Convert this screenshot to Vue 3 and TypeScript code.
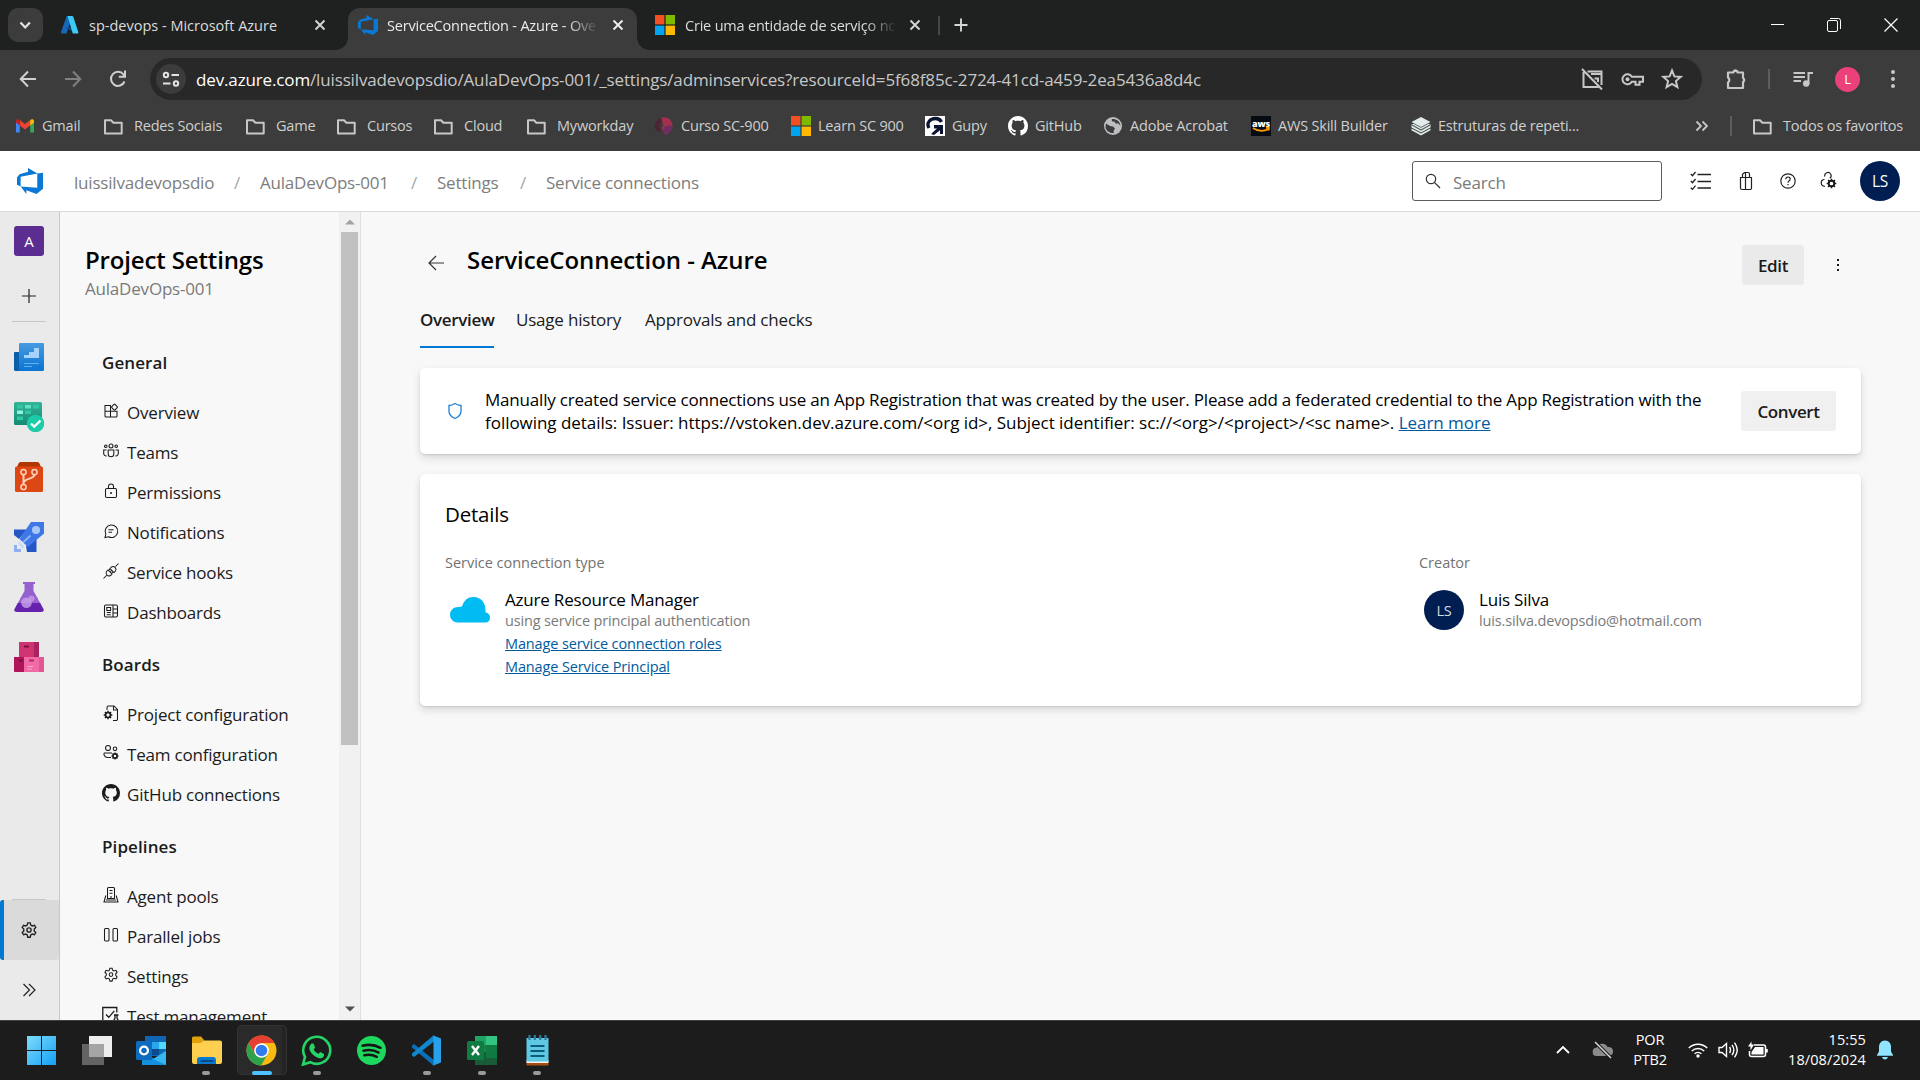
<script setup lang="ts">
interface Bookmark { kind: string; label: string; width: number }
interface NavItem { icon: string; label: string }
interface NavGroup { title: string; items: NavItem[] }

const folder = '<path d="M2 4.2h6l2.4 2.6h8.3v10.6H2z" fill="none" stroke="#c7c7c7" stroke-width="2" stroke-linejoin="round"/>'
const msLogo = '<path fill="#f25022" d="M0 0h9.4v9.4H0z"/><path fill="#7fba00" d="M10.6 0H20v9.4h-9.4z"/><path fill="#00a4ef" d="M0 10.6h9.4V20H0z"/><path fill="#ffb900" d="M10.6 10.6H20V20h-9.4z"/>'
const octocat = 'M8 0C3.58 0 0 3.58 0 8c0 3.54 2.29 6.53 5.47 7.59.4.07.55-.17.55-.38 0-.19-.01-.82-.01-1.49-2.01.37-2.53-.49-2.69-.94-.09-.23-.48-.94-.82-1.13-.28-.15-.68-.52-.01-.53.63-.01 1.08.58 1.23.82.72 1.21 1.87.87 2.33.66.07-.52.28-.87.51-1.07-1.78-.2-3.64-.89-3.64-3.95 0-.87.31-1.59.82-2.15-.08-.2-.36-1.02.08-2.12 0 0 .67-.21 2.2.82.64-.18 1.32-.27 2-.27s1.36.09 2 .27c1.53-1.04 2.2-.82 2.2-.82.44 1.1.16 1.92.08 2.12.51.56.82 1.27.82 2.15 0 3.07-1.87 3.75-3.65 3.95.29.25.54.73.54 1.48 0 1.07-.01 1.93-.01 2.2 0 .21.15.46.55.38A8.01 8.01 0 0 0 16 8c0-4.42-3.58-8-8-8z'
const gearPath = 'M7.9 1.2h2.2l.5 2 1.3.7 2-.6 1.2 1.9-1.4 1.6v1.6l1.4 1.6-1.2 1.9-2-.6-1.3.7-.5 2.1H7.9l-.5-2.1-1.3-.7-2 .6L2.9 10l1.400-1.600V6.800L2.900 5.200l1.200-1.900 2 .6 1.300-.7z'
const miniGear = (x: number, y: number, r = 3) => {
  const spokes = [0, 45, 90, 135].map(a => `<path d="M${x - r * 1.3} ${y}h${r * 0.7}M${x + r * 0.6} ${y}h${r * 0.7}" stroke="#1b1b1b" stroke-width="1.500" transform="rotate(${a} ${x} ${y})"/>`).join('')
  return `${spokes}<circle cx="${x}" cy="${y}" r="${r * 0.75}" fill="none" stroke="#1b1b1b" stroke-width="${r * 0.5}"/>`
}

const bookmarkIcons: Record<string, string> = {
  folder,
  ms: msLogo,
  gmail: '<path fill="#4285f4" d="M1 5v11.500h3.800V9L1 6z"/><path fill="#34a853" d="M15.200 16.500H19V5l-3.800 3z"/><path fill="#ea4335" d="M4.800 4 10 8l5.200-4v5.500L10 13.500l-5.200-4z"/><path fill="#c5221f" d="M1 5.200C1 3 3.300 2.700 4.800 4v5.500L1 6.500z"/><path fill="#fbbc04" d="M19 5.200C19 3 16.700 2.700 15.200 4v5.500L19 6.500z"/>',
  brain: '<path fill="#a0324f" d="M7 1.500c7-1.500 12 3 11.500 8.500-.3 4-3 7-7 9l-4-7 2-2z"/><path fill="#702d61" d="M10 11c3-1 6-2 8.500-1-.3 4-3 7-7 9L9 14z"/><path fill="#4e2435" d="M7 2C2 4 0 8 1 12l3 4 3-1-2-6 3-3z"/>',
  gupy: '<path fill="#fff" d="M0 0h20v20H0z"/><path d="M4 12c-3-5 1-9.500 6.500-9.500 3 0 5 1.500 6 3.500" fill="none" stroke="#0c1433" stroke-width="3.300"/><path d="M9 9h9v9h-3v-3.800L9 19l-3-1 6-5.500H9z" fill="#0c1433"/>',
  github: `<g transform="scale(1.250)"><path fill="#fff" d="${octocat}"/></g>`,
  globe: '<circle cx="10" cy="10" r="9" fill="#bdbec1"/><path fill="#3c3c3c" d="M3 7.500 7 10l3 .5 2 2-1.500 2.500.5 2C7 17.500 3 15 2.500 11zM9 3c-1 2 1 3 2.500 2.500l1 2h3L17.500 10C17 5.500 14 3 9 3z"/>',
  aws: '<path fill="#050b10" d="M0 0h20v20H0z"/><text x="10" y="10.500" fill="#fff" font-family="Open Sans, sans-serif" font-size="9" font-weight="800" text-anchor="middle">aws</text><path d="M2 12c5 3.500 11 3.500 15.500 1M15 11.500l3 .5-.5 2.500" fill="none" stroke="#f90" stroke-width="1.800"/>',
  layers: '<path fill="#e2ecea" d="M10 1 19.500 6 10 11 .5 6z"/><path fill="#e2ecea" d="m.5 8.500 2-.8 7.500 4 7.500-4 2 .8v3L10 16.500.5 11.500z"/><path fill="#e2ecea" d="m.5 12.500 9.500 5 9.500-5v1.800L10 19.500.5 14.300z"/><path d="m1 9 9 5 9-5" fill="none" stroke="#55605e" stroke-width="1.200"/>',
}

const bookmarks: Bookmark[] = [
  { kind: 'gmail', label: 'Gmail', width: 88 },
  { kind: 'folder', label: 'Redes Sociais', width: 142 },
  { kind: 'folder', label: 'Game', width: 91 },
  { kind: 'folder', label: 'Cursos', width: 97 },
  { kind: 'folder', label: 'Cloud', width: 93 },
  { kind: 'folder', label: 'Myworkday', width: 128 },
  { kind: 'brain', label: 'Curso SC-900', width: 137 },
  { kind: 'ms', label: 'Learn SC 900', width: 134 },
  { kind: 'gupy', label: 'Gupy', width: 83 },
  { kind: 'github', label: 'GitHub', width: 95 },
  { kind: 'globe', label: 'Adobe Acrobat', width: 148 },
  { kind: 'aws', label: 'AWS Skill Builder', width: 160 },
  { kind: 'layers', label: 'Estruturas de repeti...', width: 180 },
]

const navIcons: Record<string, string> = {
  overview: '<path d="M3 3.500h5.500V15H4a1 1 0 0 1-1-1zM3 9.200h12V14a1 1 0 0 1-1 1H8.500V9.200"/><rect x="10.200" y="2.800" width="4.600" height="4.600" rx=".8" transform="rotate(45 12.500 5.100)"/>',
  teams: '<circle cx="9" cy="4" r="2"/><circle cx="3.800" cy="4.200" r="1.300"/><circle cx="14.200" cy="4.200" r="1.300"/><path d="M6.200 8h5.600v4a2.800 2.800 0 0 1-5.600 0zM4.500 8H1.700v3.500a2.500 2.500 0 0 0 3 2.500M13.500 8h2.800v3.500a2.500 2.500 0 0 1-3 2.500"/>',
  permissions: '<rect x="3.500" y="6.500" width="11" height="9" rx="1.300"/><path d="M6.500 6.500V4.500a2.500 2.500 0 0 1 5 0v2"/><circle cx="9" cy="11" r="1" fill="#1b1b1b" stroke="none"/>',
  notifications: '<path d="M3 15.500 3.800 12A6.300 6.300 0 1 1 6.500 14.800zM6.500 7.700h5M6.500 10.300h3.500"/>',
  hooks: '<path d="m1.500 16.500 3-3M13.500 4.500l3-3M8 6.500l1.500-1.500a2.900 2.900 0 0 1 4 4L12 10.500zM6 8l4 4-1.500 1.500a2.900 2.900 0 0 1-4-4zM8 10l1.500-1.500M6.500 8.500 8 6.900M9.500 11.500l1.500-1.600"/>',
  dashboards: '<rect x="2.500" y="3" width="13" height="12" rx="1.500"/><path d="M11 3v12M11 7h4.500M11 11h4.500M4.800 5.500h3.800v3H4.800zM4.800 10.500h4M4.800 12.700h4"/>',
  projectConfig: `<path d="M5 6V3.500a1.500 1.500 0 0 1 1.500-1.500H12l3.500 3.500V15a1.500 1.500 0 0 1-1.500 1.500h-3M11.500 2v4h4"/>${miniGear(6, 11, 3.300)}`,
  teamConfig: `<circle cx="6" cy="4" r="2.500"/><circle cx="13" cy="4.800" r="1.800"/><path d="M10 9H2.500C1.500 9 1.500 13.500 6 13.500h3"/>${miniGear(13, 12, 2.700)}`,
  github: `<g transform="scale(1.125)"><path fill="#1b1b1b" stroke="none" d="${octocat}"/></g>`,
  agent: '<path d="M5.500 12.500V2.500a1 1 0 0 1 1-1h5a1 1 0 0 1 1 1v10zM7.500 4.500h3M7.500 7.200h3M3.800 9.500 2 16h14l-1.800-6.500M4 14h10M9 10v2.500"/>',
  parallel: '<rect x="2.500" y="2.500" width="4.500" height="12.500" rx="1"/><rect x="11" y="2.500" width="4.500" height="12.500" rx="1"/>',
  settings: `<g transform="translate(0 1)"><path d="${gearPath}"/><circle cx="9" cy="7.600" r="1.800"/></g>`,
  test: '<path d="M9.500 15.500H.8V1.500h14v5M4 8.500l2.800 2.800 5.500-6.500M12 9h4.500M13 9v3l-2.500 5h7L15 12V9" stroke-width="1.300"/>',
}

const groups: NavGroup[] = [
  { title: 'General', items: [
    { icon: 'overview', label: 'Overview' },
    { icon: 'teams', label: 'Teams' },
    { icon: 'permissions', label: 'Permissions' },
    { icon: 'notifications', label: 'Notifications' },
    { icon: 'hooks', label: 'Service hooks' },
    { icon: 'dashboards', label: 'Dashboards' },
  ] },
  { title: 'Boards', items: [
    { icon: 'projectConfig', label: 'Project configuration' },
    { icon: 'teamConfig', label: 'Team configuration' },
    { icon: 'github', label: 'GitHub connections' },
  ] },
  { title: 'Pipelines', items: [
    { icon: 'agent', label: 'Agent pools' },
    { icon: 'parallel', label: 'Parallel jobs' },
    { icon: 'settings', label: 'Settings' },
    { icon: 'test', label: 'Test management' },
  ] },
]

const hubs: string[] = [
  '<defs><linearGradient id="h1" x1="0" y1="0" x2="0" y2="1"><stop offset="0" stop-color="#469be0"/><stop offset="1" stop-color="#0a74d2"/></linearGradient></defs><path fill="#0b5ea8" d="M0 11q0-1 1-1h5v19H1.500Q0 29 0 27.500z"/><path fill="url(#h1)" d="M5 2q0-1 1-1h23q1 0 1 1v25.500q0 1.500-1.500 1.500H3.500Q5 29 5 27z"/><path fill="#a5d3fb" d="M10 13h5v-3h5V6h5v10H10z"/><path stroke="#5fb0f3" stroke-width="1.200" d="M10 21.500h15M10 24.500h8"/>',
  '<defs><linearGradient id="h2" x1="0" y1="0" x2="0" y2="1"><stop offset="0" stop-color="#35b496"/><stop offset="1" stop-color="#158a75"/></linearGradient></defs><rect width="28" height="23" rx="1.500" fill="url(#h2)"/><path fill="#5fe3c2" d="M11 3h6v3.500h-6z"/><path fill="#8ff5da" d="M3 8.500h6V12H3z"/><path fill="#2fc8a5" d="M3 3h6v3.500H3zM19 3h6v3.500h-6zM11 8.500h6V12h-6zM3 14.500h6V18H3z"/><circle cx="21.500" cy="21.500" r="8.700" fill="#1bcca9"/><path d="m17 21.500 3.200 3.200 6.300-6" fill="none" stroke="#fff" stroke-width="2.300"/>',
  '<path fill="#b23600" d="M4.500 1.500Q5 0 6.500 0h17q1.500 0 2 1.500L27 5H3z"/><path fill="#dd4713" d="M1 6q0-1.500 1.500-1.500h25Q29 4.500 29 6v22.500q0 1.500-1.500 1.500h-25Q1 30 1 28.500z"/><g fill="none" stroke="#ffd0bd" stroke-width="1.500"><circle cx="9.500" cy="10" r="2.600"/><circle cx="20.500" cy="10" r="2.600"/><circle cx="9.500" cy="25" r="2.600"/><path d="M9.500 12.600v9.800M20.500 12.600c0 5-10 3-11 8.500" stroke-width="2"/></g>',
  '<path fill="#2457c5" d="M0 7.500h13L5 17 0 13zM12 24l10.500-8.500V30H13z"/><path fill="#3f78e6" d="M17 0h13v11.500L14 25 5.500 17z"/><circle cx="22" cy="8" r="4" fill="#a9c6f8"/><path stroke="#8cb2f5" stroke-width="1.800" d="m9 20.500 7.500-7"/><path fill="#c8d9fa" d="m5 19 5 5-1 3-5-5z"/><path fill="#8db0f1" d="M0 23h3v4h4v3H0z"/>',
  '<path fill="#9561cf" d="M9 0h12v2h-1.500v7L24 17H6l4.500-8V2H9z"/><path fill="#9b63d2" d="M7 15.500h16l3.500 6h-23z"/><path fill="#6422ad" d="M3.800 21h22.400l3.300 6q1 3-2.500 3H3Q-.5 30 .5 27z"/><circle cx="12.500" cy="20.700" r="5.300" fill="#c9a3ec" opacity=".8"/><circle cx="17.500" cy="16.500" r="3" fill="#c9a3ec" opacity=".7"/>',
  '<path fill="#cf3372" d="M5 0h20v15H5z"/><path fill="#a82360" d="M20 0h5v15h-5z"/><path fill="#b0145b" d="M0 15h10v15H1q-1 0-1-1z"/><path fill="#f06aa6" d="M10 15h20v14q0 1-1 1H10z"/><path fill="#e25694" d="M25 15h5v15h-5z"/><path stroke="#80103f" stroke-width="2" d="M10 4.500h5M5 18.500h4"/><path stroke="#b62665" stroke-width="2" d="M15 18.500h5"/><path stroke="#ffa5cf" stroke-width="1.200" d="M13 24.500h6M13 27h5"/>',
]

const taskbar: { id: string; state: string; art: string }[] = [
  { id: 'start', state: '', art: '<defs><linearGradient id="t1" x1="0" y1="0" x2="1" y2="1"><stop offset="0" stop-color="#7fdcfb"/><stop offset="1" stop-color="#12a0f5"/></linearGradient></defs><path fill="url(#t1)" d="M1 1h14v14H1zM16 1h14v14H16zM1 16h14v14H1zM16 16h14v14H16z"/>' },
  { id: 'views', state: '', art: '<path fill="#eee" d="M8 1h23v21H8z"/><path fill="#6d6d6d" d="M1 9h22v21H1z" opacity=".9"/><path fill="#a5a5a5" d="M8 9h15v13H8z"/>' },
  { id: 'outlook', state: '', art: '<path fill="#1066b5" d="M9 1h21v20H9z"/><path fill="#28a8ea" d="M16 7h7v7h-7z"/><path fill="#50d9ff" d="M23 7h7v7h-7z"/><path fill="#0a4b8f" d="M9 7h7v7H9zM16 14h7v6h-7z"/><path fill="#1490df" d="M6 16l12.500 8L30 16v14H6z"/><path fill="#35b8f1" d="m30 16-13 8 13 6z"/><rect y="6" width="16" height="19" rx="1.500" fill="#0f6cbd"/><circle cx="8" cy="15.500" r="3.900" fill="none" stroke="#fff" stroke-width="2.300"/>' },
  { id: 'explorer', state: 'open', art: '<path fill="#e0a20c" d="M1 3q0-1.500 1.500-1.500H10L13 5v6H1z"/><path fill="#ffd04f" d="M1 8h9l3-2.500h16q2 0 2 2V27q0 2-2 2H3q-2 0-2-2z"/><path fill="#0a78cf" d="M6 25q0-3 3-3h13q3 0 3 3v4H6z"/><path stroke="#043e70" stroke-width="1.500" d="M9.500 26h13"/>' },
  { id: 'chrome', state: 'current', art: '<circle cx="15.500" cy="15.500" r="15" fill="#f9bb11"/><path fill="#e63e32" d="M2.500 8a15 15 0 0 1 26 0H15.500L9 19z"/><path fill="#2da14c" d="M2.500 8A15 15 0 0 0 15 30.500L21.800 19 9 19z"/><circle cx="15.500" cy="15.500" r="7.300" fill="#fff"/><circle cx="15.500" cy="15.500" r="5.800" fill="#317bf0"/>' },
  { id: 'whatsapp', state: 'open', art: '<path d="M2 29.500 4 22A13.500 13.500 0 1 1 9.300 27.200z" fill="none" stroke="#25d366" stroke-width="2.600"/><path fill="#25d366" d="M10.500 8.500h2l1.600 4-1.400 1.900c1 2 2.700 3.500 4.800 4.400l1.800-1.700 3.700 1.800v1.800c-1 2.500-3.500 3-5.500 2.300-4-1.200-7-4-8.700-7.500-1-2.500-.5-5.500 1.700-7z"/>' },
  { id: 'spotify', state: '', art: '<circle cx="15.500" cy="15.500" r="14.500" fill="#1ed75f"/><path d="M6.500 10.800c6-1.600 12.500-1 18 2M7.500 15.700c5-1.300 10.500-.8 15 1.800M8.300 20.200c4.500-1 8.500-.6 12.500 1.600" fill="none" stroke="#151515" stroke-width="2.500" stroke-linecap="round"/>' },
  { id: 'vscode', state: 'open', art: '<path fill="#0a6fb8" d="M1 10.500 3 9l20 16v6L1 12.500z"/><path fill="#1088d0" d="M1 20.500 3 22 23 6.500V0L1 18.500z"/><path fill="#27a2ea" d="M22.500.5 30 3.500v24l-7.500 3z"/>' },
  { id: 'excel', state: 'open', art: '<path fill="#21a366" d="M8 1h11v9H8z"/><path fill="#33c481" d="M19 1h11v9H19z"/><path fill="#107c41" d="M19 10h11v7H19z"/><path fill="#17864c" d="M8 10h11v7H8z"/><path fill="#185c37" d="M8 17h22v13H8z"/><path fill="#0f7a41" d="M19 17h11v6H19z"/><rect y="6" width="17" height="19" rx="1.500" fill="#107c41"/><path stroke="#fff" stroke-width="2.400" d="m5 11 7 9M12 11l-7 9"/>' },
  { id: 'notepad', state: 'open', art: '<path fill="#a64e12" d="M4.500 26h22v4.500h-22z"/><path fill="#f1f1f1" d="M4.500 25h22v3h-22z"/><path fill="#5fc9e4" d="M4.500 3h22v23.500h-22z"/><path stroke="#0b5b7b" stroke-width="1.800" d="M8.500 11h14M8.500 16h14M8.500 21h14"/><path stroke="#2b7d9b" stroke-width="2.200" d="M7.500 0v5M12.800 0v5M18.200 0v5M23.500 0v5"/>' },
]
</script>

<template>
  <div class="screen">
    <header class="tabstrip">
      <div class="tab-search">
        <svg width="34" height="34" viewBox="0 0 34 34"><path d="m12.500 14.500 4.700 5 4.700-5" fill="none" stroke="#e3e3e3" stroke-width="2.200" /></svg>
      </div>
      <div class="tab first">
        <svg class="fav" width="20" height="20" viewBox="0 0 20 20">
          <path fill="#1667b7" d="M6.700 1h5.500L6.600 18.500H2q-1.500 0-1-1.500z" /><path fill="#0a4f98" d="M5.500 12.500h8l2.500 6z" /><path fill="#3ccbf4" d="M7.500 1H12q1 0 1.300 1l5 15q.5 1.500-1 1.500h-4.500z" />
        </svg>
        <span class="tab-title">sp-devops - Microsoft Azure</span>
        <svg class="x" width="12" height="12" viewBox="0 0 12 12"><path d="m1.500 1.500 9 9m0-9-9 9" stroke="#d5d5d5" stroke-width="1.900" /></svg>
      </div>
      <div class="tab active">
        <svg class="fav" width="20" height="20" viewBox="0 0 20 20"><path fill="#0a78d4" d="M20 3.700v12.200l-5 4.100-7.800-2.800V20l-4.400-5.800 12.800 1V4.200zm-4.300.6L8.500 0v2.800L1.900 4.800 0 7.300v5.600l2.800 1.300V6.800z" /></svg>
        <span class="tab-title">ServiceConnection - Azure - Ove</span>
        <svg class="x" width="12" height="12" viewBox="0 0 12 12"><path d="m1.500 1.500 9 9m0-9-9 9" stroke="#eee" stroke-width="1.900" /></svg>
      </div>
      <div class="tab third">
        <svg class="fav" width="20" height="20" viewBox="0 0 20 20" v-html="msLogo" />
        <span class="tab-title">Crie uma entidade de serviço no</span>
        <svg class="x" width="12" height="12" viewBox="0 0 12 12"><path d="m1.500 1.500 9 9m0-9-9 9" stroke="#d5d5d5" stroke-width="1.900" /></svg>
      </div>
      <i class="tab-sep" />
      <svg class="new-tab" width="14" height="14" viewBox="0 0 14 14"><path d="M7 .5v13M.5 7h13" stroke="#d5d5d5" stroke-width="1.900" /></svg>
      <div class="window-controls">
        <svg width="14" height="14" viewBox="0 0 14 14"><path d="M1 6.500h13" stroke="#fff" /></svg>
        <svg width="14" height="14" viewBox="0 0 14 14" fill="none" stroke="#fff"><rect x=".5" y="2.500" width="10" height="11" rx="1.500" /><path d="M3 .5h8.500q2 0 2 2V11" /></svg>
        <svg width="14" height="14" viewBox="0 0 14 14"><path d="m.5.5 13 13m0-13-13 13" stroke="#fff" stroke-width="1.200" /></svg>
      </div>
    </header>

    <div class="toolbar">
      <svg class="nav-btn" width="18" height="18" viewBox="0 0 18 18"><path d="M17 9H2M9 1.500 1.700 9 9 16.500" fill="none" stroke="#d0d0d0" stroke-width="2" /></svg>
      <svg class="nav-btn" width="18" height="18" viewBox="0 0 18 18"><path d="M1 9h15M9 1.500 16.300 9 9 16.500" fill="none" stroke="#808080" stroke-width="2" /></svg>
      <svg class="nav-btn reload" width="18" height="18" viewBox="0 0 18 18"><path d="M15.500 11.500A7 7 0 1 1 14.500 4.500L16 6M16 .5v6.300H9.800" fill="none" stroke="#d0d0d0" stroke-width="2" /></svg>
      <div class="omnibox">
        <span class="site-info">
          <svg width="18" height="18" viewBox="0 0 18 18" fill="none" stroke="#e3e3e3" stroke-width="2"><circle cx="4" cy="5" r="2.200" /><path d="M9.500 5H17M1 13.500h7.500" /><circle cx="14" cy="13.500" r="2.200" /></svg>
        </span>
        <span class="url"><b>dev.azure.com</b>/luissilvadevopsdio/AulaDevOps-001/_settings/adminservices?resourceId=5f68f85c-2724-41cd-a459-2ea5436a8d4c</span>
        <span class="omni-icons">
          <svg width="24" height="24" viewBox="0 0 24 24" fill="none" stroke="#c7c7c7" stroke-width="2"><path d="M7.500 4.500h14V18M18.500 20h-15V5M2 2l20 20.500" /><path d="M11 7h10M14.500 11.500H18V15" /></svg>
          <svg width="24" height="24" viewBox="0 0 24 24" fill="none" stroke="#c7c7c7" stroke-width="2"><path d="M11.800 9.800a5 5 0 1 0 0 4.900h3.700v3h4v-3H23V9.800z" /><circle cx="7.500" cy="12.200" r="2" fill="#c7c7c7" stroke="none" /></svg>
          <svg width="24" height="24" viewBox="0 0 24 24" fill="none" stroke="#c7c7c7" stroke-width="2"><path d="m12 3.500 2.400 5.900 6.300.5-4.800 4.100 1.500 6.200L12 16.900l-5.400 3.300L8.100 14 3.300 9.900l6.300-.5z" /></svg>
        </span>
      </div>
      <svg class="ext" width="24" height="24" viewBox="0 0 24 24"><path d="M4 5.500h5.500a2 2 0 0 1 4 0H19v5.500a2.300 2.300 0 0 1 0 4V21H4v-5.500a3 3 0 0 0 0-5z" fill="none" stroke="#c7c7c7" stroke-width="2.200" stroke-linejoin="round" /><path fill="#c7c7c7" d="M9 5a2.500 2.500 0 0 1 5 0zM19 10.500a2.600 2.600 0 0 1 0 5z" /></svg>
      <i class="bar-sep" />
      <svg class="media" width="22" height="22" viewBox="0 0 22 22"><path d="M1.500 5H13M1.500 9H13M1.500 13H9M16.500 16V5H21" fill="none" stroke="#c7c7c7" stroke-width="2" /><circle cx="14.200" cy="15.500" r="3.200" fill="#c7c7c7" /></svg>
      <span class="profile">L</span>
      <svg class="menu" width="6" height="20" viewBox="0 0 6 20" fill="#c7c7c7"><circle cx="3" cy="3" r="2" /><circle cx="3" cy="10" r="2" /><circle cx="3" cy="17" r="2" /></svg>
    </div>

    <div class="bookmarks">
      <div v-for="b in bookmarks" :key="b.label" class="bookmark" :class="b.kind" :style="{ width: b.width + 'px' }">
        <svg width="20" height="20" viewBox="0 0 20 20" v-html="bookmarkIcons[b.kind]" />
        <span>{{ b.label }}</span>
      </div>
      <div class="bookmark-end">
        <svg width="14" height="12" viewBox="0 0 14 12"><path d="m1.500 1.500 4.500 4.500-4.500 4.500M7.500 1.500 12 6l-4.500 4.500" fill="none" stroke="#c7c7c7" stroke-width="1.800" /></svg>
        <i class="bar-sep" />
        <div class="bookmark folder">
          <svg width="20" height="20" viewBox="0 0 20 20" v-html="folder" />
          <span>Todos os favoritos</span>
        </div>
      </div>
    </div>

    <div class="suite">
      <svg class="logo" width="26" height="26" viewBox="0 0 20 20"><path fill="#0a78d4" d="M20 3.700v12.200l-5 4.100-7.800-2.800V20l-4.400-5.800 12.800 1V4.200zm-4.300.6L8.500 0v2.800L1.900 4.800 0 7.300v5.600l2.800 1.300V6.800z" /></svg>
      <nav class="crumbs">
        <span class="c1">luissilvadevopsdio</span><span class="slash">/</span>
        <span class="c2">AulaDevOps-001</span><span class="slash">/</span>
        <span class="c3">Settings</span><span class="slash">/</span>
        <span class="c4">Service connections</span>
      </nav>
      <div class="search">
        <svg width="16" height="16" viewBox="0 0 16 16"><circle cx="6" cy="6" r="4.700" fill="none" stroke="#333" stroke-width="1.200" /><path d="m9.400 9.400 5.600 5.600" stroke="#333" stroke-width="1.300" /></svg>
        <span>Search</span>
      </div>
      <div class="suite-icons">
        <svg width="22" height="20" viewBox="0 0 22 20" fill="none" stroke="#222" stroke-width="1.300"><path d="M7.500 3.500H21M7.500 10.500H21M7.500 17H21M.8 3l1.700 1.700L5.500 1M.8 10l1.700 1.700L5.500 8M.8 16.700l1.700 1.700 3-3.700" /></svg>
        <svg width="20" height="20" viewBox="0 0 20 20" fill="none" stroke="#222" stroke-width="1.200"><path d="M4.500 6.500h11V17a1.500 1.500 0 0 1-1.500 1.500H6A1.500 1.500 0 0 1 4.500 17zM6.500 6.500V3.200L8.500 1.500H12q1.500 0 1.500 1.500v3.500M9.500 1.500V18.500" /></svg>
        <svg width="20" height="20" viewBox="0 0 20 20" fill="none" stroke="#222" stroke-width="1.200"><circle cx="10" cy="10" r="7.200" /><path d="M7.800 8.300c0-3 4.400-3 4.400-.3 0 1.800-2.200 1.800-2.200 3.800M10 13v1.300" /></svg>
        <svg width="20" height="20" viewBox="0 0 20 20" fill="none" stroke="#222" stroke-width="1.200"><path d="M5.800 5.500a3.200 3.200 0 1 1 5 1.800M5.500 8.500c-4.500 0-4.500 6.500.5 7" /><g v-html="miniGear(12.500, 12.500, 3.700)" /></svg>
      </div>
      <span class="avatar">LS</span>
    </div>

    <div class="body">
      <aside class="rail">
        <span class="project">A</span>
        <svg class="plus" width="14" height="14" viewBox="0 0 14 14"><path d="M7 0v14M0 7h14" stroke="#222" stroke-width="1.200" /></svg>
        <i class="rail-sep" />
        <div class="hubs">
          <svg v-for="(h, i) in hubs" :key="i" width="30" height="30" viewBox="0 0 30 30" v-html="h" />
        </div>
        <i class="rail-sep bottom" />
        <div class="rail-settings">
          <svg width="20" height="20" viewBox="0 0 18 18" fill="none" stroke="#222" stroke-width="1.250"><g transform="translate(0 1.400)"><path :d="gearPath" /><circle cx="9" cy="7.600" r="1.900" /></g></svg>
        </div>
        <div class="rail-expand">
          <svg width="14" height="14" viewBox="0 0 14 14"><path d="m1.500 1 6 6-6 6M7 1l6 6-6 6" fill="none" stroke="#222" stroke-width="1.200" /></svg>
        </div>
      </aside>

      <aside class="sidebar">
        <div class="sidebar-content">
          <h2>Project Settings</h2>
          <p class="project-name">AulaDevOps-001</p>
          <section v-for="g in groups" :key="g.title">
            <h3>{{ g.title }}</h3>
            <a v-for="n in g.items" :key="n.label" class="nav-item">
              <svg width="18" height="18" viewBox="0 0 18 18" fill="none" stroke="#1b1b1b" stroke-width="1.050" v-html="navIcons[n.icon]" />
              <span>{{ n.label }}</span>
            </a>
          </section>
        </div>
        <div class="scrollbar">
          <svg width="10" height="6" viewBox="0 0 10 6"><path fill="#a3a3a3" d="m0 5.500 5-5 5 5z" /></svg>
          <i class="thumb" />
          <svg width="10" height="6" viewBox="0 0 10 6"><path fill="#505050" d="m0 .5 5 5 5-5z" /></svg>
        </div>
      </aside>

      <main>
        <div class="title-row">
          <svg width="16" height="16" viewBox="0 0 16 16"><path d="M16 8H1.200M8 1 1 8l7 7" fill="none" stroke="#333" stroke-width="1.200" /></svg>
          <h1>ServiceConnection - Azure</h1>
          <button class="edit">Edit</button>
          <svg class="more" width="4" height="14" viewBox="0 0 4 14" fill="#1b1b1b"><path d="M1 1h2v2H1zM1 6h2v2H1zM1 11h2v2H1z" /></svg>
        </div>
        <nav class="pivots">
          <span class="on">Overview</span><span class="p2">Usage history</span><span>Approvals and checks</span>
        </nav>

        <section class="card banner">
          <svg width="16" height="18" viewBox="0 0 16 18"><path d="M8 1.500q3 2 6 2V9c0 4-2.500 6-6 7.500C4.500 15 2 13 2 9V3.500q3 0 6-2z" fill="none" stroke="#1f7fd6" stroke-width="1.300" /></svg>
          <p><span class="l1">Manually created service connections use an App Registration that was created by the user. Please add a federated credential to the App Registration with the</span><span class="l2">following details: Issuer: https://vstoken.dev.azure.com/&lt;org id&gt;, Subject identifier: sc://&lt;org&gt;/&lt;project&gt;/&lt;sc name&gt;. <a>Learn more</a></span></p>
          <button class="convert">Convert</button>
        </section>

        <section class="card details">
          <h4>Details</h4>
          <div class="columns">
            <div class="col type">
              <label>Service connection type</label>
              <div class="entry">
                <svg width="40" height="28" viewBox="0 0 40 28"><path fill="#00bcf2" d="M7.500 26.500A7.500 7.500 0 0 1 0 19c0-5 4-8.500 9-8 .8-.1 2-.1 3-.5C14 4 18 1 23.500 1 30.500 1 35.500 6 35.500 14.500v1.800C38.500 17 40 19 40 21.500c0 3-2 5-4.500 5z" /></svg>
                <div>
                  <p class="name">Azure Resource Manager</p>
                  <p class="sub">using service principal authentication</p>
                  <a class="l">Manage service connection roles</a>
                  <a class="l">Manage Service Principal</a>
                </div>
              </div>
            </div>
            <div class="col creator">
              <label>Creator</label>
              <div class="entry">
                <span class="avatar">LS</span>
                <div>
                  <p class="name">Luis Silva</p>
                  <p class="sub">luis.silva.devopsdio@hotmail.com</p>
                </div>
              </div>
            </div>
          </div>
        </section>
      </main>
    </div>

    <footer class="taskbar">
      <div class="apps">
        <div v-for="t in taskbar" :key="t.id" class="app" :class="t.state">
          <svg width="31" height="31" viewBox="0 0 31 31" v-html="t.art" />
          <i v-if="t.state" class="indicator" />
        </div>
      </div>
      <div class="tray">
        <svg class="caret" width="14" height="10" viewBox="0 0 14 10"><path d="m1 8 6-6 6 6" fill="none" stroke="#fff" stroke-width="1.800" /></svg>
        <svg class="cloud" width="22" height="18" viewBox="0 0 22 18"><path fill="#8b8b8b" d="M5 15a4 4 0 0 1-.5-8.200A6 6 0 0 1 15.500 6 4.600 4.600 0 0 1 17.500 15z" /><path d="m3 1 16 16" stroke="#1c1c1c" stroke-width="3.500" /><path d="m3 1 16 16" stroke="#ddd" stroke-width="1.400" /></svg>
        <div class="lang"><span>POR</span><span>PTB2</span></div>
        <svg class="wifi" width="20" height="16" viewBox="0 0 20 16" fill="none" stroke="#fff" stroke-width="1.500"><path d="M.8 6a13 13 0 0 1 18.400 0M3.800 9a9 9 0 0 1 12.400 0M6.600 11.800a5 5 0 0 1 6.800 0" /><circle cx="10" cy="14" r="1.700" fill="#fff" stroke="none" /></svg>
        <svg class="vol" width="20" height="18" viewBox="0 0 20 18" fill="none" stroke="#fff" stroke-width="1.400"><path d="M1 6.500h3L8.500 2.500v13L4 11.500H1zM11.500 6q2 3 0 6M14 3.800q3.700 5.200 0 10.400M16.500 1.600q5.500 7.400 0 14.800" /></svg>
        <svg class="bat" width="20" height="18" viewBox="0 0 20 18"><path d="M6 4h9.500q2 0 2 2v7.500q0 2-2 2H3.500q-2 0-2-2V10" fill="none" stroke="#fff" stroke-width="1.500" /><path fill="#fff" d="M7 6h8.500v7.500h-12V11zM18 8h1.800v3.500H18zM3.500.5v3H6L2.500 9.500v-4H0z" /></svg>
        <div class="clock"><span>15:55</span><span>18/08/2024</span></div>
        <svg class="bell" width="16" height="20" viewBox="0 0 16 20"><path fill="#8fe4ff" d="M8 .5c4 0 6 3 6 6.500v4.500l2 3.500v.8H0V15l2-3.500V7C2 3.500 4 .5 8 .5zM5 17h6q-1 2.500-3 2.500T5 17z" /></svg>
      </div>
    </footer>
  </div>
</template>

<style>
body { background: #f8f8f8; overflow: hidden; }
</style>

<style scoped>
.screen { width: 1920px; height: 1080px; overflow: hidden; display: flex; flex-direction: column; background: #f8f8f8; font-family: "Open Sans", "Noto Sans", sans-serif; font-size: 17px; font-stretch: 94%; letter-spacing: -0.2px; color: #1b1b1b; white-space: nowrap; }
.screen * { box-sizing: border-box; }
h1, h2, h3, h4, p { margin: 0; }
svg { display: block; flex: none; }
button { font: inherit; letter-spacing: inherit; border: 0; padding: 0; color: #1b1b1b; }
i { display: block; flex: none; }

.tabstrip { height: 50px; flex: none; background: #1f2120; display: flex; align-items: center; color: #dcdcdc; font-size: 14.5px; }
.tab-search { width: 35px; height: 34px; margin-left: 8px; border-radius: 10px; background: #3c3c3c; }
.tab { height: 50px; display: flex; align-items: center; }
.tab-title { overflow: hidden; margin-left: 9px; width: 211px; }
.first { width: 305px; padding-left: 17px; letter-spacing: 0; }
.first .x { margin-left: 14px; }
.active { width: 289px; height: 42px; align-self: flex-end; background: #3c3c3c; border-radius: 12px 12px 0 0; padding: 0 0 8px 10px; color: #eaeaea; position: relative; }
.active::before, .active::after { content: ""; position: absolute; bottom: 0; width: 12px; height: 12px; }
.active::before { left: -12px; background: radial-gradient(circle at 0 0, transparent 11.500px, #3c3c3c 12px); }
.active::after { right: -12px; background: radial-gradient(circle at 100% 0, transparent 11.500px, #3c3c3c 12px); }
.active .tab-title, .third .tab-title { mask-image: linear-gradient(90deg, #000 180px, transparent 212px); }
.active .x { margin-left: 14px; }
.third { padding-left: 18px; width: 302px; }
.third .tab-title { margin-left: 10px; width: 210px; }
.third .x { margin-left: 14px; }
.tab-sep { width: 2px; height: 19px; margin-left: -1px; background: #474747; }
.new-tab { margin-left: 14px; }
.window-controls { margin-left: auto; margin-right: 22px; display: flex; gap: 43px; }

.toolbar { height: 58px; flex: none; background: #3c3c3c; display: flex; align-items: center; padding-left: 19px; }
.nav-btn { margin-right: 27px; }
.reload { margin-right: 23px; }
.omnibox { width: 1552px; height: 42px; border-radius: 21px; background: #282828; display: flex; align-items: center; padding-left: 6px; }
.site-info { width: 30px; height: 30px; border-radius: 50%; background: #3c3c3c; display: grid; place-items: center; }
.url { margin-left: 10px; width: 1011px; color: #c7c7c7; font-size: 17px; letter-spacing: -0.140px; }
.url b { font-weight: 400; color: #fff; }
.omni-icons { margin-left: auto; margin-right: 18px; display: flex; gap: 16px; }
.ext { margin-left: 22px; }
.bar-sep { width: 2px; height: 20px; background: #5e5e5e; }
.toolbar .bar-sep { margin-left: 20px; }
.media { margin-left: 22px; }
.profile { width: 25px; height: 25px; margin-left: 21px; border-radius: 50%; background: #ec407a; color: #fff; font-size: 13px; display: grid; place-items: center; }
.menu { margin-left: 30px; }

.bookmarks { height: 43px; flex: none; background: #3c3c3c; display: flex; align-items: center; padding: 0 17px 7px 15px; font-size: 14.500px; color: #cfcfcf; }
.bookmark { display: flex; align-items: center; flex: none; gap: 7px; }
.bookmark span { padding-bottom: 2px; }
.bookmark.folder { gap: 11px; }
.bookmark-end { display: flex; align-items: center; margin-left: auto; }
.bookmark-end .bar-sep { margin: 0 20px 0 21px; }
.bookmark-end .bookmark { width: 151px; }

.suite { height: 61px; flex: none; background: #fff; border-bottom: 1px solid #dcdcdc; display: flex; align-items: center; padding-left: 17px; }
.crumbs { display: flex; margin-left: 31px; padding-top: 2px; color: #7d7d7d; }
.crumbs span { flex: none; }
.c1 { width: 140px; } .c2 { width: 131px; } .c3 { width: 63px; }
.slash { width: 46px; text-align: center; color: #a5a5a5; }
.search { width: 250px; height: 40px; margin-left: auto; border: 1px solid #5c5c5c; border-radius: 3px; display: flex; align-items: center; padding-left: 12px; color: #7a7a7a; }
.search span { margin-left: 12px; padding-top: 2px; }
.suite-icons { display: flex; align-items: center; margin-left: 28px; }
.suite-icons svg + svg { margin-left: 24px; }
.suite-icons svg:nth-child(3) { margin-left: 22px; }
.suite-icons svg:nth-child(4) { margin-left: 21px; }
.avatar { width: 40px; height: 40px; border-radius: 50%; background: #001e51; color: #fff; font-size: 15.500px; display: grid; place-items: center; flex: none; }
.suite .avatar { margin: 0 20px 0 21px; }
.creator .avatar { font-size: 14.500px; color: #d5d9e2; }

.body { flex: 1; min-height: 0; display: flex; }
.rail { width: 60px; background: #eaeaea; border-right: 1px solid #c8c8c8; padding-right: 1px; display: flex; flex-direction: column; align-items: center; }
.project { width: 30px; height: 30px; margin-top: 14px; border-radius: 3px; background: #5c2d91; color: #fff; font-size: 15px; display: grid; place-items: center; }
.plus { margin-top: 33px; }
.rail-sep { width: 34px; height: 1px; margin-top: 18px; background: #c8c8c8; }
.hubs { display: flex; flex-direction: column; gap: 30px; margin-top: 20px; }
.rail-sep.bottom { margin-top: auto; }
.rail-settings { width: 59px; height: 60px; margin-right: -1px; background: #dadada; border-left: 4px solid #0078d4; border-radius: 3px; display: grid; place-items: center; padding-right: 5px; }
.rail-expand { height: 60px; display: grid; place-items: center; }

.sidebar { width: 301px; display: flex; border-right: 1px solid #e0e0e0; overflow: hidden; }
.sidebar-content { width: 279px; padding: 28px 0 0 25px; }
h2, h1 { font-size: 24px; font-weight: 600; line-height: 40px; letter-spacing: -0.150px; color: #000; }
h1 { letter-spacing: -0.050px; }
.project-name { color: #7a7a7a; line-height: 22px; margin: -2px 0 30px; }
section h3 { height: 62px; line-height: 62px; padding: 2px 0 0 17px; font-size: 17px; font-weight: 600; letter-spacing: 0.100px; }
.nav-item { height: 40px; display: flex; align-items: center; padding-left: 17px; }
.nav-item svg { margin-bottom: 2px; }
.nav-item span { margin-left: 7px; }
.scrollbar { width: 21px; background: #f1f1f1; display: flex; flex-direction: column; align-items: center; padding: 7px 0 8px; }
.thumb { width: 17px; height: 513px; margin: 7px 0 auto; background: #c1c1c1; }

main { flex: 1; padding: 28px 59px 0 59px; }
.title-row { display: flex; height: 50px; align-items: center; padding-left: 8px; }
.title-row > svg:first-child { margin-bottom: 4px; }
h1 { margin: 0 auto 10px 23px; }
.edit, .convert { height: 40px; border-radius: 3px; background: #eaeaea; font-weight: 600; letter-spacing: -0.400px; }
.edit { width: 62px; }
.more { margin: 0 21px 0 32px; }
.pivots { display: flex; height: 59px; margin-bottom: 19px; padding-top: 18px; }
.pivots span { line-height: 24px; height: 40px; }
.on { width: 74px; border-bottom: 2px solid #0078d4; font-weight: 600; letter-spacing: -0.320px; }
.p2 { width: 107px; margin: 0 22px; }
.card { background: #fff; border-radius: 5px; box-shadow: 0 4px 9px rgba(0, 0, 0, .13), 0 1px 2px rgba(0, 0, 0, .11); }
.banner { height: 86px; display: flex; align-items: center; padding: 0 25px 0 27px; color: #000; }
.banner p { margin-left: 22px; line-height: 23px; }
.banner p span { display: block; }
.banner .l2 { letter-spacing: -0.035px; }
.convert { width: 95px; margin-left: auto; background: #f0f0f0; }
a { color: inherit; }
.banner a, a.l { color: #005a9e; text-decoration: underline; }
.details { height: 232px; margin-top: 20px; padding: 24px 25px 0; }
h4 { font-size: 20.500px; font-weight: 400; line-height: 32px; color: #000; }
.columns { display: flex; margin-top: 22px; }
.type { width: 974px; }
label { display: block; font-size: 14.500px; font-weight: 500; line-height: 22px; letter-spacing: -0.020px; color: #727272; }
.entry { display: flex; margin-top: 15px; padding-left: 5px; }
.entry > svg { margin-top: 7px; }
.entry > .avatar { margin-top: 1px; }
.entry > div { margin-left: 15px; display: flex; flex-direction: column; align-items: flex-start; }
.name { line-height: 22px; color: #000; }
.sub { line-height: 20px; font-size: 14.500px; letter-spacing: -0.160px; margin-bottom: 1px; color: #7a7a7a; }
.l { line-height: 23px; font-size: 14.500px; letter-spacing: -0.130px; }

.taskbar { height: 60px; flex: none; background: #1c1c1c; border-top: 1px solid #3f3f3f; display: flex; justify-content: space-between; color: #fff; font-size: 14.500px; }
.apps { display: flex; padding-left: 16px; }
.app { width: 50px; height: 50px; margin: 4px 5.150px 0 0; border-radius: 5px; display: flex; flex-direction: column; align-items: center; padding-top: 10px; }
.app.current { background: #2a2a2a; box-shadow: inset 0 0 0 1px #333, inset -6px 0 0 -1px #242424; }
.indicator { width: 8px; height: 4px; margin-top: 5px; border-radius: 2px; background: #9a9a9a; }
.app.current .indicator { width: 20px; background: #4cc2ff; }
.tray { display: flex; align-items: center; padding: 0 27px 1px 0; line-height: 20px; }
.cloud { margin-left: 22px; }
.lang { width: 50px; margin-left: 11px; display: flex; flex-direction: column; align-items: center; }
.wifi { margin-left: 13px; }
.vol { margin-left: 10px; }
.bat { margin-left: 10px; }
.clock { width: 90px; margin-left: 8px; display: flex; flex-direction: column; align-items: flex-end; letter-spacing: 0.100px; }
.bell { margin-left: 11px; }
</style>
